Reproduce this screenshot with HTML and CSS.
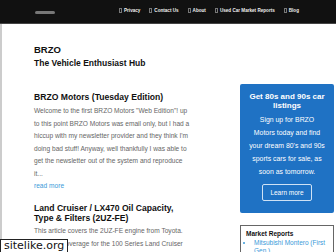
FILE: index.html
```html
<!DOCTYPE html>
<html lang="en">
<head>
    <meta charset="UTF-8">
    <meta name="viewport" content="width=device-width, initial-scale=1.0">
    <title>BRZO - The Vehicle Enthusiast Hub</title>
    <link rel="stylesheet" href="styles.css">
</head>
<body>

    <div class="topbar">
        <span class="logo"></span>
        <ul class="nav">
            <li><span class="ico"></span>Privacy</li>
            <li><span class="ico"></span>Contact Us</li>
            <li><span class="ico"></span>About</li>
            <li><span class="ico"></span>Used Car Market Reports</li>
            <li><span class="ico"></span>Blog</li>
        </ul>
    </div>

    <div class="page">
        <div class="main">
            <h1 class="site-name">BRZO</h1>
            <p class="tagline">The Vehicle Enthusiast Hub</p>

            <div class="post">
                <h2>BRZO Motors (Tuesday Edition)</h2>
                <p>Welcome to the first BRZO Motors "Web Edition"! up to this point BRZO Motors was email only, but I had a hiccup with my newsletter provider and they think I'm doing bad stuff! Anyway, well thankfully I was able to get the newsletter out of the system and reproduce it...</p>
                <a href="#" class="more">read more</a>
            </div>

            <div class="post second">
                <h2>Land Cruiser / LX470 Oil Capacity, Type &amp; Filters (2UZ-FE)</h2>
                <p>This article covers the 2UZ-FE engine from Toyota.<br>Including coverage for the 100 Series Land Cruiser and LX470.</p>
            </div>
        </div>

        <div class="sidebar">
            <div class="promo">
                <h3>Get 80s and 90s car listings</h3>
                <p>Sign up for BRZO Motors today and find your dream 80's and 90s sports cars for sale, as soon as tomorrow.</p>
                <a href="#" class="btn">Learn more</a>
            </div>

            <div class="reports">
                <h4>Market Reports</h4>
                <ul>
                    <li><a href="#">Mitsubishi Montero (First Gen.)</a></li>
                </ul>
            </div>
        </div>
    </div>

    <div class="stamp">sitelike.org</div>

</body>
</html>
```

FILE: styles.css
```css
body {
    margin: 0;
    font-family: "Liberation Sans", Arial, sans-serif;
    background: white;
    overflow: hidden;
}
.topbar {
    height: 24px;
    background-color: #111;
    border-bottom: 1px solid #444;
    display: flex;
    align-items: center;
    padding-bottom: 2px;
    box-sizing: border-box;
}
.logo {
    display: block;
    width: 20px;
    height: 3px;
    margin-left: 35px;
    margin-top: 3px;
    border-radius: 2px;
    background: #777;
}
.nav {
    list-style: none;
    margin: 0 0 0 64px;
    padding: 0;
    display: flex;
    gap: 9px;
    white-space: nowrap;
}
.nav li {
    color: #eee;
    font-size: 4.6px;
    font-weight: bold;
    display: flex;
    align-items: center;
}
.ico {
    display: inline-block;
    width: 1px;
    height: 3px;
    border: 1px solid #777;
    margin-right: 2px;
}
.page {
    display: flex;
}
.main {
    width: 206px;
    border-left: 2px solid #ccc;
    padding: 20px 0 0 32px;
    box-sizing: border-box;
    flex-shrink: 0;
}
.site-name {
    margin: 0;
    font-size: 9.5px;
    line-height: 12px;
    color: #111;
}
.tagline {
    margin: 1px 0 0;
    font-size: 8.5px;
    line-height: 12px;
    font-weight: bold;
    color: #111;
}
.post {
    margin-top: 23px;
}
.post h2 {
    margin: 0;
    font-size: 8.6px;
    line-height: 10px;
    color: #111;
    width: 150px;
}
.post p {
    margin: 3px 0 0;
    font-size: 6.6px;
    line-height: 12.5px;
    color: #666;
    width: 158px;
}
.post.second {
    margin-top: 11px;
}
.post.second p {
    margin-top: 2px;
}
.more {
    display: block;
    font-size: 6.6px;
    line-height: 12px;
    color: #3a9ad9;
    text-decoration: none;
}
.sidebar {
    width: 94px;
    margin-left: 34px;
    padding-top: 60px;
    flex-shrink: 0;
}
.promo {
    background-color: #1f72c4;
    color: white;
    text-align: center;
    padding: 8px 0 12px;
    border-radius: 2px;
}
.promo h3 {
    margin: 0 6px;
    font-size: 8px;
    line-height: 9px;
}
.promo p {
    margin: 3px auto;
    width: 76.5px;
    font-size: 6.9px;
    line-height: 13px;
}
.btn {
    display: inline-block;
    border: 1px solid #cfe2f5;
    border-radius: 2px;
    color: white;
    font-size: 6.5px;
    padding: 4px 7px;
    text-decoration: none;
}
.reports {
    margin-top: 12px;
    border: 1px solid #666;
    padding: 4px 5px;
}
.reports h4 {
    margin: 0;
    font-size: 6.5px;
    color: #111;
}
.reports ul {
    margin: 2px 0 0;
    padding-left: 8px;
}
.reports li {
    font-size: 6.5px;
    line-height: 8px;
    color: #3a9ad9;
}
.reports a {
    color: #3a9ad9;
    text-decoration: none;
}
.stamp {
    position: absolute;
    left: 0;
    top: 239px;
    background: white;
    border: 1px solid #222;
    font-size: 11px;
    line-height: 12px;
    padding: 0 3px;
    font-family: "DejaVu Sans", sans-serif;
    color: #111;
}
```
